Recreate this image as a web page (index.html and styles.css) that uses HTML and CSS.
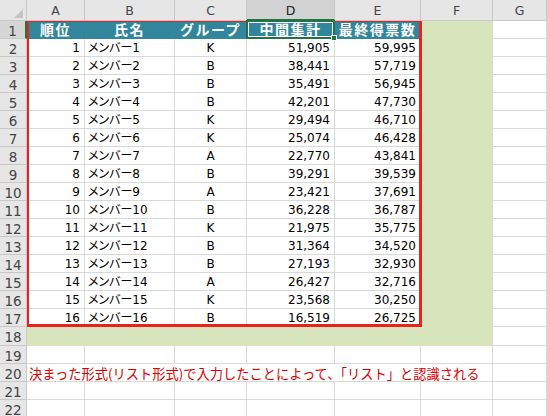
FILE: index.html
```html
<!DOCTYPE html>
<html lang="ja">
<head>
<meta charset="utf-8">
<title>リスト形式</title>
<link rel="stylesheet" href="styles.css">
</head>
<body>
<div class="sheet">
  <div class="corner"><svg width="9" height="9" viewBox="0 0 9 9"><polygon points="9,0 9,9 0,9" fill="#c4c4c4"/></svg></div>
  <div class="ch">A</div><div class="ch">B</div><div class="ch">C</div><div class="ch ch-sel">D</div><div class="ch">E</div><div class="ch">F</div><div class="ch">G</div>

  <div class="rh rh-sel">1</div>
  <div class="c teal">順位</div><div class="c teal">氏名</div><div class="c teal">グループ</div><div class="c teal">中間集計</div><div class="c teal">最終得票数</div><div class="c grn"></div><div class="c"></div>

  <div class="rh">2</div><div class="c n">1</div><div class="c t">メンバー1</div><div class="c m">K</div><div class="c n">51,905</div><div class="c n">59,995</div><div class="c grn"></div><div class="c"></div>
  <div class="rh">3</div><div class="c n">2</div><div class="c t">メンバー2</div><div class="c m">B</div><div class="c n">38,441</div><div class="c n">57,719</div><div class="c grn"></div><div class="c"></div>
  <div class="rh">4</div><div class="c n">3</div><div class="c t">メンバー3</div><div class="c m">B</div><div class="c n">35,491</div><div class="c n">56,945</div><div class="c grn"></div><div class="c"></div>
  <div class="rh">5</div><div class="c n">4</div><div class="c t">メンバー4</div><div class="c m">B</div><div class="c n">42,201</div><div class="c n">47,730</div><div class="c grn"></div><div class="c"></div>
  <div class="rh">6</div><div class="c n">5</div><div class="c t">メンバー5</div><div class="c m">K</div><div class="c n">29,494</div><div class="c n">46,710</div><div class="c grn"></div><div class="c"></div>
  <div class="rh">7</div><div class="c n">6</div><div class="c t">メンバー6</div><div class="c m">K</div><div class="c n">25,074</div><div class="c n">46,428</div><div class="c grn"></div><div class="c"></div>
  <div class="rh">8</div><div class="c n">7</div><div class="c t">メンバー7</div><div class="c m">A</div><div class="c n">22,770</div><div class="c n">43,841</div><div class="c grn"></div><div class="c"></div>
  <div class="rh">9</div><div class="c n">8</div><div class="c t">メンバー8</div><div class="c m">B</div><div class="c n">39,291</div><div class="c n">39,539</div><div class="c grn"></div><div class="c"></div>
  <div class="rh">10</div><div class="c n">9</div><div class="c t">メンバー9</div><div class="c m">A</div><div class="c n">23,421</div><div class="c n">37,691</div><div class="c grn"></div><div class="c"></div>
  <div class="rh">11</div><div class="c n">10</div><div class="c t">メンバー10</div><div class="c m">B</div><div class="c n">36,228</div><div class="c n">36,787</div><div class="c grn"></div><div class="c"></div>
  <div class="rh">12</div><div class="c n">11</div><div class="c t">メンバー11</div><div class="c m">K</div><div class="c n">21,975</div><div class="c n">35,775</div><div class="c grn"></div><div class="c"></div>
  <div class="rh">13</div><div class="c n">12</div><div class="c t">メンバー12</div><div class="c m">B</div><div class="c n">31,364</div><div class="c n">34,520</div><div class="c grn"></div><div class="c"></div>
  <div class="rh">14</div><div class="c n">13</div><div class="c t">メンバー13</div><div class="c m">B</div><div class="c n">27,193</div><div class="c n">32,930</div><div class="c grn"></div><div class="c"></div>
  <div class="rh">15</div><div class="c n">14</div><div class="c t">メンバー14</div><div class="c m">A</div><div class="c n">26,427</div><div class="c n">32,716</div><div class="c grn"></div><div class="c"></div>
  <div class="rh">16</div><div class="c n">15</div><div class="c t">メンバー15</div><div class="c m">K</div><div class="c n">23,568</div><div class="c n">30,250</div><div class="c grn"></div><div class="c"></div>
  <div class="rh">17</div><div class="c n">16</div><div class="c t">メンバー16</div><div class="c m">B</div><div class="c n">16,519</div><div class="c n">26,725</div><div class="c grn"></div><div class="c"></div>

  <div class="rh">18</div><div class="c grn span-af"></div><div class="c"></div>

  <div class="rh">19</div><div class="c"></div><div class="c"></div><div class="c"></div><div class="c"></div><div class="c"></div><div class="c"></div><div class="c"></div>

  <div class="rh">20</div><div class="c note span-af">決まった形式(リスト形式)で入力したことによって、「リスト」と認識される</div><div class="c"></div>

  <div class="rh">21</div><div class="c"></div><div class="c"></div><div class="c"></div><div class="c"></div><div class="c"></div><div class="c"></div><div class="c"></div>
  <div class="rh">22</div><div class="c"></div><div class="c"></div><div class="c"></div><div class="c"></div><div class="c"></div><div class="c"></div><div class="c"></div>

  <div class="redbox"></div>
  <div class="selbox"><span class="handle"></span></div>
</div>
</body>
</html>
```

FILE: styles.css
```css
* { box-sizing: border-box; }
html, body { margin: 0; padding: 0; background: #ffffff; }
body {
  font-family: "DejaVu Sans", "Noto Sans CJK JP", sans-serif;
  font-size: 12px;
  color: #000;
  overflow: hidden;
  width: 547px;
  height: 416px;
}
.sheet {
  position: relative;
  display: grid;
  grid-template-columns: 27px 58px 90px 72px 88px 86px 72px 1fr;
  grid-template-rows: 21px repeat(17, 18px) 19px repeat(4, 18px);
  width: 547px;
}
.corner {
  background: #e6e6e6;
  border-right: 1px solid #c8c8c8;
  border-bottom: 1px solid #c8c8c8;
  display: flex;
  justify-content: flex-end;
  align-items: flex-end;
  padding: 0 3px 2px 0;
}
.corner svg { display: block; }
.ch {
  background: #e6e6e6;
  border-right: 1px solid #c8c8c8;
  border-bottom: 1px solid #c8c8c8;
  color: #444;
  font-size: 12.5px;
  display: flex;
  align-items: center;
  justify-content: center;
  padding-top: 1px;
}
.ch-sel {
  background: #d2d2d2;
  color: #222;
  border-bottom: 2px solid #217346;
}
.rh {
  background: #e6e6e6;
  border-right: 1px solid #c8c8c8;
  border-bottom: 1px solid #c8c8c8;
  color: #444;
  font-size: 13.5px;
  display: flex;
  align-items: center;
  justify-content: center;
  padding-top: 2px;
}
.rh-sel {
  background: #d6d6d6;
  border-right: 2px solid #217346;
}
.c {
  border-right: 1px solid #d9d9d9;
  border-bottom: 1px solid #d9d9d9;
  display: flex;
  align-items: flex-end;
  line-height: 13px;
  padding-bottom: 1px;
  white-space: nowrap;
  min-width: 0;
}
.n { justify-content: flex-end; padding-right: 4px; }
.t { justify-content: flex-start; padding-left: 3px; font-feature-settings: "palt"; }
.m { justify-content: center; }
.teal {
  background: #31869b;
  border-color: #31869b;
  color: #fff;
  font-family: "Noto Sans CJK JP", sans-serif;
  font-weight: bold;
  font-size: 14px;
  letter-spacing: 1.5px;
  justify-content: center;
  align-items: center;
  line-height: 16px;
}
.grn {
  background: #d8e4bc;
  border-bottom-color: #d8e4bc;
}
.span-af { grid-column: 2 / 8; }
.note {
  color: #e00000;
  font-family: "Noto Sans CJK JP", sans-serif;
  font-size: 13.25px;
  padding-left: 2px;
  overflow: visible;
}
.redbox {
  position: absolute;
  grid-column: 2 / 7;
  grid-row: 2 / 19;
  top: 0;
  bottom: 0;
  left: 0;
  right: -1px;
  border-top: 1px solid #e8231f;
  border-left: 2px solid #e8231f;
  border-right: 3px solid #e8231f;
  border-bottom: 3px solid #e8231f;
  pointer-events: none;
}
.selbox {
  position: absolute;
  grid-column: 5 / 6;
  grid-row: 2 / 3;
  top: -1px;
  left: -1px;
  right: 0;
  bottom: 0;
  border: 2px solid #217346;
  box-shadow: inset 0 0 0 1px #ffffff;
}
.handle {
  position: absolute;
  right: -4px;
  bottom: -4px;
  width: 6px;
  height: 6px;
  background: #217346;
  border: 1px solid #fff;
}
```
